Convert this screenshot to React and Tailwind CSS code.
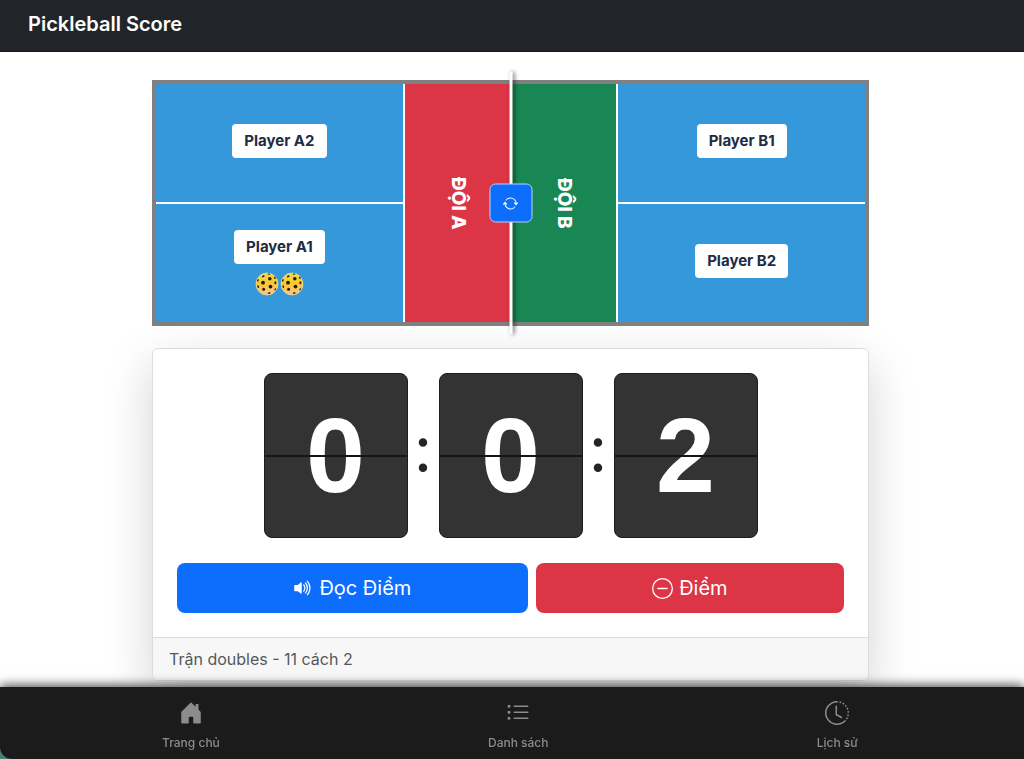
import {
  BsArrowRepeat,
  BsClockHistory,
  BsDashCircle,
  BsHouseDoorFill,
  BsListUl,
  BsVolumeUpFill,
} from "react-icons/bs"

const navItems = [
  { label: "Trang chủ", href: "#home", icon: BsHouseDoorFill },
  { label: "Danh sách", href: "#matches", icon: BsListUl },
  { label: "Lịch sử", href: "#history", icon: BsClockHistory },
]

const score = [0, 0, 2]

function Ball() {
  return (
    <svg viewBox="0 0 24 24" className="h-6 w-6" aria-hidden="true">
      <defs>
        <linearGradient id="ball" x1="0" y1="0" x2="0.2" y2="1">
          <stop offset="0" stopColor="#f2dc50" />
          <stop offset="0.55" stopColor="#fbc82c" />
          <stop offset="1" stopColor="#fcc48a" />
        </linearGradient>
      </defs>
      <circle cx="12" cy="12" r="11" fill="url(#ball)" stroke="#e4d79c" strokeWidth="0.8" />
      <g fill="#241c10">
        <circle cx="8" cy="10.7" r="1.9" />
        <circle cx="14.8" cy="6.8" r="1.8" />
        <circle cx="15.5" cy="14.6" r="1.9" />
        <circle cx="8.6" cy="17.3" r="1.5" />
        <ellipse cx="8.3" cy="4.3" rx="1.5" ry="0.9" transform="rotate(-25 8.3 4.3)" />
        <ellipse cx="14" cy="2.1" rx="1.4" ry="0.6" />
        <ellipse cx="20.4" cy="10.8" rx="1" ry="1.5" />
        <ellipse cx="19.8" cy="5.8" rx="0.7" ry="1.3" transform="rotate(-40 19.8 5.8)" />
        <ellipse cx="2.9" cy="8.4" rx="0.7" ry="1.4" transform="rotate(15 2.9 8.4)" />
        <ellipse cx="3.2" cy="14.6" rx="0.8" ry="1.4" transform="rotate(-15 3.2 14.6)" />
        <ellipse cx="20.2" cy="17.3" rx="0.7" ry="1.3" transform="rotate(35 20.2 17.3)" />
        <ellipse cx="14.2" cy="21" rx="1.5" ry="0.8" transform="rotate(-12 14.2 21)" />
      </g>
    </svg>
  )
}

function PlayerCell({ name, balls = 0 }) {
  return (
    <div className="flex flex-1 flex-col items-center justify-center bg-[#3498db]">
      <button
        type="button"
        className="mb-1 h-[34px] rounded bg-white px-3 text-[15px] font-bold text-[#212c42]"
      >
        {name}
      </button>
      {balls > 0 && (
        <div className="flex gap-px pt-1">
          {Array.from({ length: balls }, (_, i) => (
            <Ball key={i} />
          ))}
        </div>
      )}
    </div>
  )
}

function Court() {
  return (
    <section className="relative flex h-[246px] border-4 border-[#808080]">
      <div className="flex flex-[7] flex-col gap-[2px] border-r-2 border-white bg-white">
        <PlayerCell name="Player A2" />
        <PlayerCell name="Player A1" balls={2} />
      </div>
      <div className="flex flex-[3] items-center justify-center bg-[#dc3545] text-[19px] font-extrabold text-white">
        <span className="[writing-mode:vertical-rl]">ĐỘI A</span>
      </div>
      <div className="flex flex-[3] items-center justify-center bg-[#198754] text-[19px] font-extrabold text-white">
        <span className="[writing-mode:vertical-rl]">ĐỘI B</span>
      </div>
      <div className="flex flex-[7] flex-col gap-[2px] border-l-2 border-white bg-white">
        <PlayerCell name="Player B1" />
        <PlayerCell name="Player B2" />
      </div>

      {/* net */}
      <div className="absolute -inset-y-3 left-1/2 w-[3px] -translate-x-1/2 bg-white shadow-[2px_0_4px_rgba(0,0,0,0.6)]" />
      <button
        type="button"
        aria-label="Đổi sân"
        className="absolute left-1/2 top-1/2 grid h-[39px] w-[43px] -translate-x-1/2 -translate-y-1/2 place-items-center rounded-md border border-[#b9d3ff] bg-[#0d6efd] text-white"
      >
        <BsArrowRepeat className="h-4 w-4" />
      </button>
    </section>
  )
}

function ScoreDigit({ value }) {
  return (
    <div className="relative flex h-[165px] w-36 items-center justify-center rounded-lg border border-[#1c1c1c] bg-[#333]">
      <span className="pb-px font-['Liberation_Sans',sans-serif] text-[106px] font-bold leading-none text-white">
        {value}
      </span>
      <div className="absolute inset-x-0 top-1/2 h-[2px] -translate-y-1/2 bg-[#151515]" />
    </div>
  )
}

function Scoreboard() {
  return (
    <section className="overflow-hidden rounded-md border border-[#dcdddf] bg-white">
      <div className="p-6">
        <div className="flex items-center justify-center">
          {score.map((value, i) => (
            <div key={i} className="flex items-center">
              {i > 0 && (
                <span className="w-[31px] pb-[14px] text-center text-[64px] leading-none text-[#212529]">
                  :
                </span>
              )}
              <ScoreDigit value={value} />
            </div>
          ))}
        </div>
        <div className="mt-[25px] flex gap-2 text-xl text-white">
          <button
            type="button"
            className="flex h-[50px] flex-auto items-center justify-center gap-1.5 rounded-lg bg-[#0d6efd]"
          >
            <BsVolumeUpFill className="h-5 w-5" />
            Đọc Điểm
          </button>
          <button
            type="button"
            className="flex h-[50px] flex-auto items-center justify-center gap-1.5 rounded-lg bg-[#dc3545]"
          >
            <BsDashCircle className="h-[21px] w-[21px]" />
            Điểm
          </button>
        </div>
      </div>
      <div className="border-t border-[#dcdddf] bg-[#f7f7f7] px-4 py-2 leading-[26px] text-[#54585c]">
        Trận doubles - 11 cách 2
      </div>
    </section>
  )
}

function App() {
  return (
    <div className="flex min-h-screen flex-col bg-white font-[Inter,'Noto_Sans',sans-serif] text-base">
      <header className="flex h-[52px] items-center border-b border-[#15181b] bg-[#212529] px-7">
        <a href="#home" className="pb-[3px] text-xl font-semibold text-white">
          Pickleball Score
        </a>
      </header>

      <main className="flex-1 pb-[78px] pr-[3px] pt-7">
        <div className="mx-auto flex max-w-[717px] flex-col gap-[22px]">
          <Court />
          <div className="rounded-md shadow-[0_16px_48px_rgba(0,0,0,0.175)]">
            <Scoreboard />
          </div>
        </div>
      </main>

      <footer className="fixed inset-x-0 bottom-0 bg-[#4a8071] shadow-[0_-2px_10px_rgba(0,0,0,0.7)]">
        <nav className="flex h-[72px] justify-around rounded-bl-xl bg-[#1b1b1b] pl-7 pr-8">
          {navItems.map(({ label, href, icon: Icon }) => (
            <a
              key={label}
              href={href}
              className="flex flex-col items-center justify-center gap-2 pt-2 text-xs font-medium leading-5 text-[#8c8c8c]"
            >
              <Icon className="h-6 w-6" />
              {label}
            </a>
          ))}
        </nav>
      </footer>
    </div>
  )
}

export default App
